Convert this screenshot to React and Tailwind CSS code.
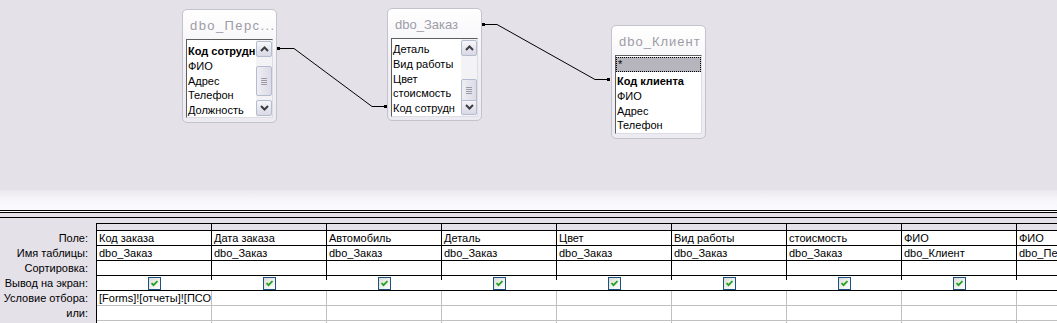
import React from 'react';

const FONT = { fontFamily: '"Liberation Sans", Arial, sans-serif' };

function ScrollBtn({ up }) {
  return (
    <div className="flex h-[16px] w-[16px] items-center justify-center rounded-[2px] border border-[#b4bccf] bg-gradient-to-b from-[#f7f7fb] to-[#d9d8e4]">
      <svg width="9" height="6" viewBox="0 0 9 6">
        <path
          d={up ? 'M1 5 L4.5 1.5 L8 5' : 'M1 1 L4.5 4.5 L8 1'}
          stroke="#3c3c44"
          strokeWidth="2"
          fill="none"
        />
      </svg>
    </div>
  );
}

function ScrollBar({ thumbTop, thumbHeight }) {
  return (
    <div className="relative flex w-[16px] shrink-0 flex-col justify-between bg-[#f3f3f6] py-px">
      <ScrollBtn up />
      <div
        className="absolute left-0 flex w-[16px] items-center justify-center rounded-[2px] border border-[#b4bccf] bg-gradient-to-r from-[#eeeef4] to-[#dcdbe6]"
        style={{ top: thumbTop, height: thumbHeight }}
      >
        <div className="flex flex-col gap-px">
          <div className="h-px w-[6px] bg-[#9a9aa8]" />
          <div className="h-px w-[6px] bg-[#9a9aa8]" />
          <div className="h-px w-[6px] bg-[#9a9aa8]" />
          <div className="h-px w-[6px] bg-[#9a9aa8]" />
        </div>
      </div>
      <ScrollBtn />
    </div>
  );
}

function TableBox({ className, title, titleClass, items, scroll, selectedStar, listClass }) {
  return (
    <div
      className={`absolute flex w-[95px] flex-col rounded-[5px] border border-[#c4c2cc] bg-gradient-to-b from-white via-[#f1f0f5] to-[#ecebf1] ${className}`}
    >
      <div
        className={`h-[29px] overflow-hidden whitespace-nowrap pl-[7px] pt-[8px] text-[13px] leading-[16px] text-[#9e9ca6] ${titleClass}`}
      >
        {title}
      </div>
      <div className="mx-[3px] flex h-[79px] border-t border-l border-r border-b border-t-[#5e5e5e] border-l-[#5e5e5e] border-r-[#dedde4] border-b-[#dedde4] bg-white">
        <div className={`min-w-0 flex-1 overflow-hidden ${listClass}`}>
          {selectedStar && (
            <div className="mb-[2px] h-[15px] border border-dotted border-black bg-[#b6b5bd] pl-px text-[11px] leading-[12px] text-black">
              *
            </div>
          )}
          {items.map((it, i) => (
            <div
              key={i}
              className={`h-[14.75px] whitespace-nowrap pl-px text-[11px] leading-[14.75px] text-black ${
                it.bold ? 'font-bold' : ''
              }`}
            >
              {it.name}
            </div>
          ))}
        </div>
        {scroll && <ScrollBar thumbTop={scroll.top} thumbHeight={scroll.height} />}
      </div>
    </div>
  );
}

function Check() {
  return (
    <span className="flex h-[13px] w-[13px] items-center justify-center border border-[#1c5180] bg-gradient-to-br from-[#dcdcd6] to-white">
      <svg width="7" height="7" viewBox="0 0 7 7">
        <path d="M0.5 3 L2.5 5.2 L6.5 1" stroke="#21a121" strokeWidth="1.8" fill="none" />
      </svg>
    </span>
  );
}

const fields = ['Код заказа', 'Дата заказа', 'Автомобиль', 'Деталь', 'Цвет', 'Вид работы', 'стоисмость', 'ФИО', 'ФИО'];
const tables = ['dbo_Заказ', 'dbo_Заказ', 'dbo_Заказ', 'dbo_Заказ', 'dbo_Заказ', 'dbo_Заказ', 'dbo_Заказ', 'dbo_Клиент', 'dbo_Персонал'];

function Label({ children }) {
  return (
    <div className="w-[96px] shrink-0 pr-[8px] text-right text-[11px] leading-[14px] text-black">
      {children}
    </div>
  );
}

function TextRow({ label, values, dark }) {
  return (
    <div className="flex h-[15px]">
      <Label>{label}</Label>
      <div className="flex border-l border-black">
        {values.map((v, i) => (
          <div
            key={i}
            className={`w-[115px] shrink-0 overflow-hidden whitespace-nowrap border-r border-b bg-white pl-[2px] text-[11px] leading-[14px] text-black ${
              dark ? 'border-black' : 'border-[#c0c0c0]'
            }`}
          >
            {v}
          </div>
        ))}
      </div>
    </div>
  );
}

export default function App() {
  const empty = fields.map(() => '');
  return (
    <div className="h-[323px] w-[1057px] overflow-hidden bg-[#e5e1e9]" style={FONT}>
      <div className="relative h-[190px]">
        <svg className="absolute left-0 top-0" width="1057" height="190">
          <polyline points="277,48.5 294,48.5 372,106.5 387,106.5" stroke="#000" fill="none" />
          <polyline points="482,24.5 497,24.5 595,79.5 610,79.5" stroke="#000" fill="none" />
          <rect x="277" y="47" width="3" height="3" fill="#000" />
          <rect x="384" y="105" width="3" height="3" fill="#000" />
          <rect x="482" y="23" width="3" height="3" fill="#000" />
          <rect x="607" y="78" width="3" height="3" fill="#000" />
        </svg>
        <TableBox
          className="left-[182px] top-[9px] h-[114px]"
          title="dbo_Перс..."
          titleClass="tracking-[1.4px]"
          listClass="pt-[4px]"
          items={[
            { name: 'Код сотрудн', bold: true },
            { name: 'ФИО' },
            { name: 'Адрес' },
            { name: 'Телефон' },
            { name: 'Должность' },
          ]}
          scroll={{ top: 26, height: 30 }}
        />
        <TableBox
          className="left-[387px] top-[8px] h-[113px]"
          title="dbo_Заказ"
          listClass="pt-[3px]"
          items={[
            { name: 'Деталь' },
            { name: 'Вид работы' },
            { name: 'Цвет' },
            { name: 'стоисмость' },
            { name: 'Код сотрудн' },
          ]}
          scroll={{ top: 40, height: 22 }}
        />
        <TableBox
          className="left-[611px] top-[25px] h-[114px]"
          title="dbo_Клиент"
          titleClass="tracking-[1px]"
          listClass="pt-px"
          selectedStar
          items={[
            { name: 'Код клиента', bold: true },
            { name: 'ФИО' },
            { name: 'Адрес' },
            { name: 'Телефон' },
          ]}
        />
      </div>

      <div className="h-[20px] bg-gradient-to-b from-[#ebe8ef] via-[#f7f6fa] to-[#fbfbfd]" />
      <div className="h-px bg-black" />
      <div className="h-px bg-white" />
      <div className="h-px bg-black" />
      <div className="h-[4px]" />
      <div className="h-px bg-black" />
      <div className="h-[5px]" />

      <div className="flex h-[8px]">
        <div className="w-[96px] shrink-0" />
        <div className="flex border-l border-black">
          {fields.map((_, i) => (
            <div key={i} className="w-[115px] shrink-0 border-t border-r border-b border-black" />
          ))}
        </div>
      </div>
      <TextRow label="Поле:" values={fields} dark />
      <TextRow label="Имя таблицы:" values={tables} dark />
      <TextRow label="Сортировка:" values={empty} dark />
      <div className="flex h-[15px]">
        <Label>Вывод на экран:</Label>
        <div className="flex border-l border-black">
          {fields.map((_, i) => (
            <div
              key={i}
              className="relative flex w-[115px] shrink-0 justify-center border-b border-black bg-white pt-px"
            >
              <div className="absolute right-0 top-0 h-[4px] w-px bg-black" />
              <Check />
            </div>
          ))}
        </div>
      </div>
      <TextRow label="Условие отбора:" values={['[Forms]![отчеты]![ПСО]', ...empty.slice(1)]} />
      <TextRow label="или:" values={empty} />
      <TextRow label="" values={empty} />
    </div>
  );
}
